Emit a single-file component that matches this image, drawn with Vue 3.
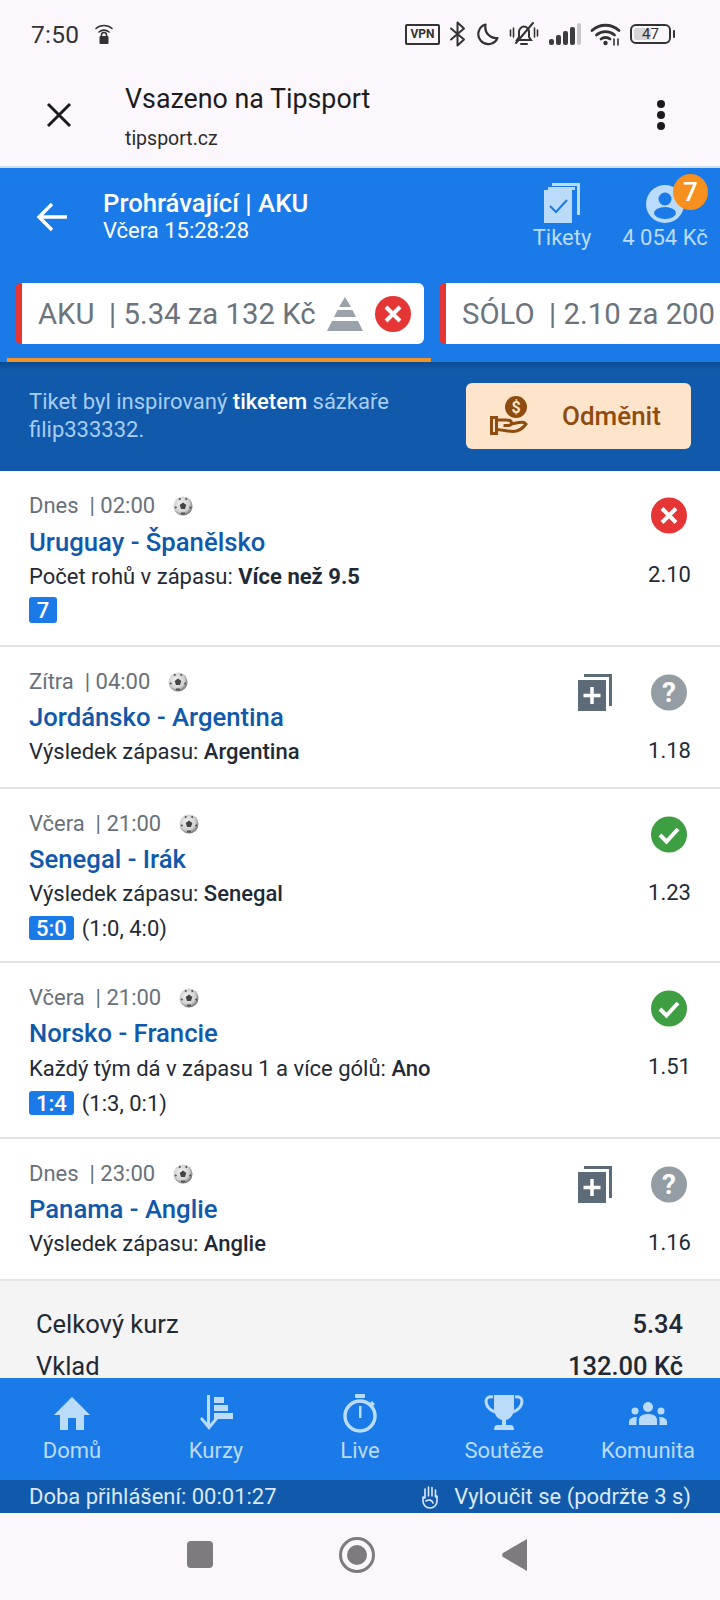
<script setup>
const rows = [
  { day: 'Dnes', time: '02:00', title: 'Uruguay - Španělsko', label: 'Počet rohů v zápasu:', pick: 'Více než 9.5', strong: true, odd: '2.10', state: 'lost', score: '7', first: true },
  { day: 'Zítra', time: '04:00', title: 'Jordánsko - Argentina', label: 'Výsledek zápasu:', pick: 'Argentina', odd: '1.18', state: 'open', copy: true },
  { day: 'Včera', time: '21:00', title: 'Senegal - Irák', label: 'Výsledek zápasu:', pick: 'Senegal', odd: '1.23', state: 'won', score: '5:0', detail: '(1:0, 4:0)' },
  { day: 'Včera', time: '21:00', title: 'Norsko - Francie', label: 'Každý tým dá v zápasu 1 a více gólů:', pick: 'Ano', odd: '1.51', state: 'won', score: '1:4', detail: '(1:3, 0:1)', tall: true },
  { day: 'Dnes', time: '23:00', title: 'Panama - Anglie', label: 'Výsledek zápasu:', pick: 'Anglie', odd: '1.16', state: 'open', copy: true }
]
const navItems = ['Domů', 'Kurzy', 'Live', 'Soutěže', 'Komunita']
</script>

<template>
  <div class="screen">
    <div class="status">
      <span class="clock">7:50</span>
      <svg class="wifilock" width="20" height="24" viewBox="0 0 20 24" fill="none" stroke="#333" stroke-width="1.6" stroke-linecap="round">
        <path d="M2 6.500c4.500-4 11.500-4 16 0M5 10c2.800-2.500 7.200-2.500 10 0"/>
        <rect x="5.500" y="14" width="9" height="8" rx="1" fill="#333" stroke="none"/>
        <path d="M7.500 14.500v-1.500a2.500 2.500 0 0 1 5 0v1.500" stroke-width="1.500"/>
      </svg>
      <div class="status-icons">
        <span class="vpn">VPN</span>
        <svg width="18" height="26" viewBox="0 0 18 26" fill="none" stroke="#333" stroke-width="2" stroke-linejoin="round" stroke-linecap="round"><path d="M2 7.500l13 11-6.500 6v-23l6.500 6-13 11"/></svg>
        <svg width="23" height="24" viewBox="0 0 23 24" fill="none" stroke="#333" stroke-width="2.200"><path d="M9.500 2.500a10 10 0 1 0 12 13.500c-7 1-13.500-5-12-13.500z" stroke-linejoin="round"/></svg>
        <svg width="32" height="26" viewBox="0 0 30 26" fill="none" stroke="#333" stroke-width="2" stroke-linecap="round">
          <path d="M8 19h14l-2-3v-5c0-3-2.500-5.500-5-5.500-2.500 0-5 2.500-5 5.500v5z"/>
          <path d="M12 23h6M7 22L24 2"/>
          <path d="M1.500 9v6M4.500 7v9M25.500 7v9M28.500 9v6" stroke-width="1.600"/>
        </svg>
        <svg width="32" height="22" viewBox="0 0 32 22">
          <rect x="0" y="16" width="5" height="6" rx="2" fill="#3d3d40"/>
          <rect x="7" y="12" width="5" height="10" rx="2" fill="#3d3d40"/>
          <rect x="14" y="8" width="5" height="14" rx="2" fill="#3d3d40"/>
          <rect x="21" y="4" width="5" height="18" rx="2" fill="#3d3d40"/>
          <rect x="28" y="0" width="4" height="22" rx="2" fill="#c9c6cb"/>
        </svg>
        <svg width="31" height="24" viewBox="0 0 31 24" fill="none" stroke="#333" stroke-width="2.800" stroke-linecap="round">
          <path d="M2 8.500c7.500-7 19.500-7 27 0M6.500 13c5-4.500 13-4.500 18 0M11 17c2.500-2 6.500-2 9 0"/>
          <circle cx="15.500" cy="21" r="2.200" fill="#333" stroke="none"/>
          <path d="M24 17v6M28 17v6" stroke-width="1.600"/>
        </svg>
        <div class="battery"><span class="battery-fill"></span><span class="battery-num">47</span></div>
      </div>
    </div>

    <div class="chrome">
      <svg class="close" width="28" height="28" viewBox="0 0 28 28" stroke="#1c1b20" stroke-width="3" fill="none"><path d="M3 3l22 22M25 3L3 25"/></svg>
      <div class="chrome-text">
        <div class="chrome-title">Vsazeno na Tipsport</div>
        <div class="chrome-url">tipsport.cz</div>
      </div>
      <div class="dots"><i></i><i></i><i></i></div>
    </div>

    <div class="main">
      <div class="head">
        <div class="head-top">
          <svg class="back" width="32" height="30" viewBox="0 0 32 30" fill="none" stroke="#fff" stroke-width="3.400"><path d="M31 15H3M16 2L3 15l13 13"/></svg>
          <div class="head-title">
            <div class="head-h">Prohrávající | AKU</div>
            <div class="head-sub">Včera 15:28:28</div>
          </div>
          <div class="head-act tik">
            <svg width="36" height="40" viewBox="0 0 36 40">
              <path d="M8 0h28v32h-3V3H8z" fill="#bbdbfb"/>
              <path d="M4 4h27v3H4z" fill="#bbdbfb"/>
              <rect x="0" y="7" width="28" height="33" fill="#bbdbfb"/>
              <path d="M6 23l6 6 11-12" fill="none" stroke="#1a7ae8" stroke-width="2"/>
            </svg>
            <span>Tikety</span>
          </div>
          <div class="head-act acc">
            <div class="user">
              <svg width="38" height="38" viewBox="0 0 38 38">
                <circle cx="19" cy="19" r="19" fill="#bbdbfb"/>
                <circle cx="19" cy="14" r="6.500" fill="#1a7ae8"/>
                <ellipse cx="19" cy="28" rx="11" ry="6" fill="#1a7ae8"/>
              </svg>
              <b class="badge">7</b>
            </div>
            <span>4 054 Kč</span>
          </div>
        </div>
        <div class="tabs">
          <div class="tab">
            <span class="tab-text">AKU&nbsp; | 5.34 za 132 Kč</span>
            <svg class="pyr" width="36" height="34" viewBox="0 0 36 34" fill="#9aa3ab">
              <path d="M18 0l6 10H12z"/><path d="M10.500 13h15l3.500 7H7z"/><path d="M5 24h26l5 10H0z"/>
            </svg>
            <svg width="36" height="36" viewBox="0 0 36 36">
              <circle cx="18" cy="18" r="18" fill="#e53535"/>
              <path d="M11 11l14 14M25 11L11 25" stroke="#fff" stroke-width="4"/>
            </svg>
          </div>
          <div class="tab">
            <span class="tab-text">SÓLO&nbsp; | 2.10 za 200</span>
          </div>
        </div>
        <div class="underline"></div>
      </div>

      <div class="banner">
        <p class="banner-text">Tiket byl inspirovaný <b>tiketem</b> sázkaře filip333332.</p>
        <div class="reward">
          <svg width="38" height="40" viewBox="0 0 38 40">
            <circle cx="26" cy="11" r="11" fill="#8e4c10"/>
            <text x="26" y="17" text-anchor="middle" font-size="16" font-weight="700" font-family="Roboto, sans-serif" fill="#fee4cb">$</text>
            <path d="M1.500 21.500h5v16h-5zM6.500 24h10c3 0 5 1 5 3s-2 2.500-4 2.500h-4M21 28l8-1.500c3-.5 6 0 7 1.500-3 4-8 7.500-13 7.500-5 0-10-1.500-16.500-2" fill="none" stroke="#8e4c10" stroke-width="3"/>
          </svg>
          <span>Odměnit</span>
        </div>
      </div>

      <div class="list">
        <div v-for="r in rows" :key="r.title" class="row" :class="{ first: r.first, tall: r.tall }">
          <div class="row-left">
            <div class="when">
              <span>{{ r.day }}&nbsp; | {{ r.time }}</span>
              <svg class="ball" width="20" height="20" viewBox="0 0 20 20">
                <defs><radialGradient id="ballg" cx="42%" cy="40%" r="60%"><stop offset="0" stop-color="#f4f4f4"/><stop offset=".7" stop-color="#d0d0d0"/><stop offset="1" stop-color="#777"/></radialGradient></defs>
                <circle cx="10" cy="10" r="9.500" fill="url(#ballg)"/>
                <path d="M10 6.500l3.300 2.400-1.300 4h-4l-1.300-4z" fill="#444"/>
                <path d="M6 2.500l1.500 1M14 2.500l-1.500 1M2 11l1.500 1M18 11l-1.500 1M8 17.500h4" stroke="#555" stroke-width="2"/>
              </svg>
            </div>
            <div class="match">{{ r.title }}</div>
            <div class="desc">{{ r.label }} <b :class="{ heavy: r.strong }">{{ r.pick }}</b></div>
            <div v-if="r.score" class="score">
              <span class="chip">{{ r.score }}</span>
              <span v-if="r.detail" class="detail">{{ r.detail }}</span>
            </div>
          </div>
          <div class="row-right">
            <div class="row-icons">
              <svg v-if="r.copy" width="34" height="37" viewBox="0 0 34 37">
                <path d="M6 0h28v32h-3V3H6z" fill="#5d6b78"/>
                <rect x="0" y="6" width="28" height="31" fill="#5d6b78"/>
                <path d="M14 13v17M5.500 21.500h17" stroke="#fff" stroke-width="3.500"/>
              </svg>
              <svg class="state" width="36" height="37" viewBox="0 0 36 37">
                <template v-if="r.state === 'lost'">
                  <circle cx="18" cy="18.500" r="18" fill="#e53535"/>
                  <path d="M11 11.500l14 14M25 11.500l-14 14" stroke="#fff" stroke-width="4"/>
                </template>
                <template v-else-if="r.state === 'won'">
                  <circle cx="18" cy="18.500" r="18" fill="#3d9e42"/>
                  <path d="M9 19l6.500 6.500L27 13" fill="none" stroke="#fff" stroke-width="4"/>
                </template>
                <template v-else>
                  <circle cx="18" cy="18.500" r="18" fill="#949ca4"/>
                  <text x="18" y="28" text-anchor="middle" font-size="28" font-weight="700" font-family="Roboto, sans-serif" fill="#fff">?</text>
                </template>
              </svg>
            </div>
            <div class="odd">{{ r.odd }}</div>
          </div>
        </div>
      </div>

      <div class="summary">
        <div class="sum-row"><span>Celkový kurz</span><b>5.34</b></div>
        <div class="sum-row"><span>Vklad</span><b>132.00 Kč</b></div>
      </div>
    </div>

    <div class="nav">
      <div v-for="(n, i) in navItems" :key="n" class="nav-item">
        <svg width="40" height="40" viewBox="0 0 40 40" fill="#bbdbfb">
          <path v-if="i === 0" d="M20 4L2 22h6v15h8V25h8v12h8V22h6z"/>
          <template v-if="i === 1">
            <path d="M11 2h3v30h-3z"/>
            <path d="M4 26l9 11 9-11-2-2-7 8-7-8z"/>
            <rect x="18" y="4" width="10" height="6"/><rect x="18" y="12" width="14" height="6"/><rect x="18" y="20" width="19" height="6"/>
          </template>
          <template v-if="i === 2">
            <rect x="15" y="1" width="10" height="4" rx="1"/>
            <circle cx="20" cy="23" r="15" fill="none" stroke="#bbdbfb" stroke-width="3.500"/>
            <path d="M19 13h2.500v12H19zM32 8l3 3-2.500 2.500-3-3z"/>
          </template>
          <template v-if="i === 3">
            <path d="M10 2h20v14c0 6-4 10-8 11v5h5c2 0 3 2 3 5H10c0-3 1-5 3-5h5v-5c-4-1-8-5-8-11z"/>
            <path d="M9 4C5 3 2 5 2 8c0 5 4 9 9 11M31 4c4-1 7 1 7 4 0 5-4 9-9 11" fill="none" stroke="#bbdbfb" stroke-width="3"/>
          </template>
          <template v-if="i === 4">
            <circle cx="20" cy="14" r="5"/><circle cx="7" cy="18" r="3.500"/><circle cx="33" cy="18" r="3.500"/>
            <path d="M11 32v-5c0-4 4-6 9-6s9 2 9 6v5zM1 32v-3c0-3 3-5 8-5-.5 1-.5 2-.5 3v5zM39 32v-3c0-3-3-5-8-5 .5 1 .5 2 .5 3v5z"/>
          </template>
        </svg>
        <span>{{ n }}</span>
      </div>
    </div>

    <div class="strip">
      <span>Doba přihlášení: 00:01:27</span>
      <span class="excl">
        <svg width="18" height="24" viewBox="0 0 18 24" fill="none" stroke="#dbe9fa" stroke-width="1.600" stroke-linecap="round" stroke-linejoin="round">
          <path d="M4 13V4M7.500 11V2M11 11V2.500M14.500 12V5M4 13l-2-1v4c0 4 3 7 7 7s7-3 7-7v-5M5 16c3-2 6-1 7 2"/>
        </svg>
        Vyloučit se (podržte 3 s)
      </span>
    </div>

    <div class="sysnav">
      <i class="sq"></i>
      <i class="ring"><i class="dot"></i></i>
      <svg width="26" height="32" viewBox="0 0 26 32"><path d="M26 0v32L2 18a3 3 0 0 1 0-4z" fill="#7d7a80"/></svg>
    </div>
  </div>
</template>

<style>
html, body { margin: 0; padding: 0; background: #fcf7fd; }
</style>

<style scoped>
.screen {
  width: 720px;
  height: 1600px;
  display: flex;
  flex-direction: column;
  overflow: hidden;
  background: #fcf7fd;
  font-family: Roboto, "Liberation Sans", sans-serif;
  color: #1f2a36;
}
.status {
  height: 60px;
  flex: none;
  display: flex;
  align-items: center;
  padding: 8px 45px 0 31px;
  box-sizing: border-box;
}
.clock { font-size: 24.5px; font-weight: 400; color: #333; letter-spacing: .3px; }
.wifilock { margin-left: 15px; }
.status-icons { margin-left: auto; display: flex; align-items: center; gap: 9px; }
.vpn {
  width: 35px; height: 21px; box-sizing: border-box;
  border: 2px solid #333; border-radius: 2px;
  font-size: 12px; font-weight: 700; color: #333;
  display: flex; align-items: center; justify-content: center;
}
.battery {
  width: 41px; height: 20px; margin-right: 4px; box-sizing: border-box;
  border: 2px solid #333; border-radius: 6px; position: relative;
  display: flex; align-items: center; justify-content: center;
}
.battery::after {
  content: ""; position: absolute; right: -6px; top: 4px;
  width: 2px; height: 8px; background: #333; border-radius: 1px;
}
.battery-fill { position: absolute; left: 2px; top: 2px; bottom: 2px; width: 17px; background: #d9d6da; border-radius: 2px; }
.battery-num { position: relative; font-size: 15px; color: #333; }

.chrome {
  height: 108px;
  flex: none;
  display: flex;
  align-items: center;
  box-sizing: border-box;
  border-bottom: 2px solid #cfe0f3;
}
.close { margin-left: 45px; margin-top: 4px; }
.chrome-text { margin-left: 52px; flex: 1; margin-top: 7px; }
.chrome-title { font-size: 26.800px; line-height: 36px; color: #1c1b20; }
.chrome-url { font-size: 19.500px; line-height: 28px; margin-top: 8px; color: #2c2c30; }
.dots { width: 8px; margin-right: 55px; margin-top: 3px; display: flex; flex-direction: column; gap: 3px; }
.dots i { width: 8px; height: 8px; border-radius: 50%; background: #1c1b20; }

.main { flex: 1; min-height: 0; overflow: hidden; display: flex; flex-direction: column; }
.head { flex: none; background: #1a7ae8; height: 194px; box-sizing: border-box; position: relative; }
.head-top { display: flex; height: 115px; box-sizing: border-box; }
.back { margin: 34px 0 0 36px; }
.head-title { margin-left: 35px; flex: 1; padding-top: 19px; color: #fff; }
.head-h { font-size: 25.700px; font-weight: 500; line-height: 32px; }
.head-sub { font-size: 22px; line-height: 26px; margin-top: -1px; }
.head-act { display: flex; flex-direction: column; align-items: center; color: #bbdbfb; font-size: 22px; }
.head-act span { white-space: nowrap; line-height: 28px; }
.tik { width: 80px; margin-left: 0; padding-top: 15px; gap: 1px; }
.acc { width: 88px; margin: 0 11px 0 19px; padding-top: 17px; }
.user { position: relative; height: 40px; margin-bottom: -1px; }
.badge {
  position: absolute; left: 27px; top: -11px;
  width: 35px; height: 36px; border-radius: 50%;
  background: #f7901e; color: #fff; font-size: 26px; font-weight: 500;
  display: flex; align-items: center; justify-content: center;
}
.tabs { display: flex; gap: 15px; padding-left: 15px; width: 900px; }
.tab {
  height: 61px; box-sizing: border-box;
  background: #fff; border-radius: 6px;
  border-left: 7px solid #e53535;
  display: flex; align-items: center;
  padding-left: 16px;
  flex: none; width: 409px;
}
.tab-text { font-size: 29.300px; color: #6b747c; white-space: nowrap; }
.pyr { margin-left: 11px; margin-right: 12px; flex: none; }
.tab svg { flex: none; }
.underline { position: absolute; left: 7px; bottom: 0; width: 424px; height: 4px; background: #f0932b; }

.banner {
  flex: none; height: 109px;
  background: linear-gradient(#0c4a90 0, #1059ab 8px);
  display: flex; box-sizing: border-box;
  padding: 21px 29px 0 29px;
  justify-content: space-between;
}
.banner-text { margin: 5px 0 0; width: 400px; font-size: 22px; line-height: 28px; color: #a9cdf3; }
.banner-text b { font-weight: 500; color: #fff; }
.reward {
  width: 225px; height: 66px; border-radius: 6px; background: #fee4cb;
  display: flex; align-items: center; box-sizing: border-box; padding-left: 24px;
  color: #8e4c10; font-size: 26px; font-weight: 500;
}
.reward span { margin-left: 34px; }

.list { flex: none; background: #fff; }
.row {
  display: flex; justify-content: space-between;
  padding: 20px 29px 0 29px;
  border-bottom: 2px solid #e3e3e3;
  box-sizing: border-box;
  min-height: 142px;
}
.row.first { padding-top: 20px; min-height: 176px; }
.row-left { flex: 1; min-width: 0; padding-bottom: 21px; }
.first .row-left { padding-bottom: 21px; }
.tall .row-left { padding-bottom: 22px; }
.when { display: flex; align-items: center; font-size: 22px; line-height: 29px; color: #68717a; }
.ball { margin-left: 18px; }
.match { font-size: 25.700px; font-weight: 500; line-height: 42px; color: #1059ab; }
.first .match { line-height: 45px; }
.tall .match { line-height: 43px; }
.desc { font-size: 22px; line-height: 28px; }
.first .desc { line-height: 24px; }
.desc b { font-weight: 500; }
.desc b.heavy { font-weight: 700; }
.score { display: flex; align-items: center; margin-top: 8px; height: 24px; font-size: 22px; }
.first .score { height: 26px; margin-top: 8px; }
.chip {
  min-width: 28px; height: 100%; padding: 0 7px; box-sizing: border-box;
  background: #1a7ae8; color: #fff; border-radius: 3px; font-weight: 500;
  display: flex; align-items: center; justify-content: center;
}
.detail { margin-left: 8px; }
.row-right { display: flex; flex-direction: column; align-items: flex-end; width: 130px; flex: none; }
.row-icons { display: flex; height: 37px; margin-top: 7px; gap: 39px; align-items: flex-start; margin-right: 4px; }
.first .row-icons { margin-top: 6px; }
.odd { font-size: 22px; line-height: 28px; margin-top: 26px; }
.first .odd { margin-top: 27px; }

.summary { flex: 1; background: #f4f4f4; padding: 27px 37px 0 36px; }
.sum-row { display: flex; justify-content: space-between; font-size: 25.500px; line-height: 32px; margin-bottom: 10px; }
.sum-row b { font-weight: 500; }

.nav { flex: none; height: 102px; background: #1a7ae8; display: flex; }
.nav-item { width: 144px; display: flex; flex-direction: column; align-items: center; color: #bbdbfb; font-size: 22px; padding-top: 15px; box-sizing: border-box; }
.nav-item span { line-height: 30px; margin-top: 3px; }
.strip {
  flex: none; height: 33px; background: #1059ab; color: #dbe9fa;
  display: flex; justify-content: space-between; align-items: center;
  padding: 0 29px 0 29px; font-size: 22px;
}
.excl { display: flex; align-items: center; gap: 15px; }

.sysnav { height: 87px; flex: none; display: flex; align-items: center; padding: 0 0 4px 187px; box-sizing: border-box; }
.sq { width: 26px; height: 27px; background: #7d7a80; border-radius: 4px; display: block; }
.ring { width: 36px; height: 36px; box-sizing: border-box; border: 3px solid #7d7a80; border-radius: 50%; margin-left: 126px; display: flex; align-items: center; justify-content: center; }
.dot { width: 20px; height: 20px; background: #7d7a80; border-radius: 50%; display: block; }
.sysnav svg { margin-left: 126px; }
</style>
